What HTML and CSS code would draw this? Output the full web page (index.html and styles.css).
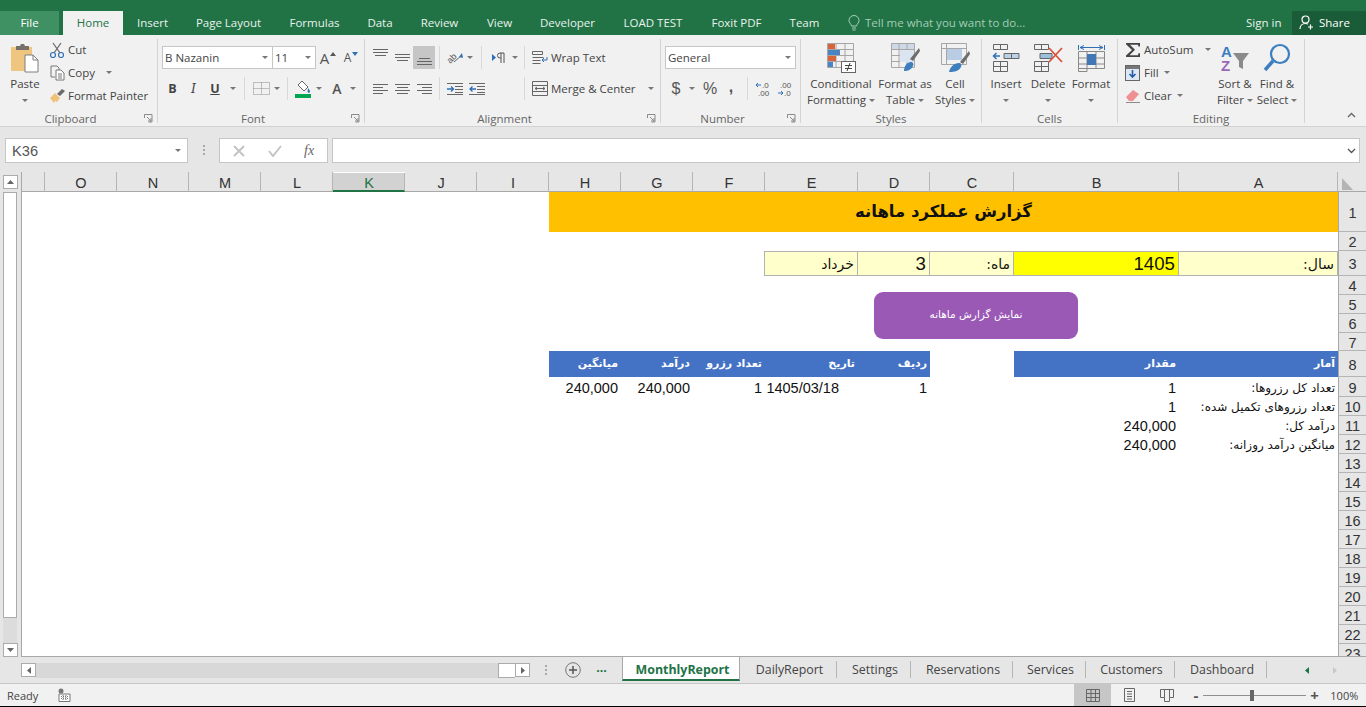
FILE: index.html
```html
<!DOCTYPE html>
<html lang="fa">
  <head>
    <meta charset="UTF-8" />
    <title>MonthlyReport - Excel</title>
    <link rel="stylesheet" href="styles.css">
  </head>
  <body>
    <div class="tabbar">
      <div class="tab file">File</div>
      <div class="tab active">Home</div>
      <div class="tab">Insert</div>
      <div class="tab">Page Layout</div>
      <div class="tab">Formulas</div>
      <div class="tab">Data</div>
      <div class="tab">Review</div>
      <div class="tab">View</div>
      <div class="tab">Developer</div>
      <div class="tab">LOAD TEST</div>
      <div class="tab">Foxit PDF</div>
      <div class="tab">Team</div>
      <div class="tell-me">
        <svg width="12" height="16" viewBox="0 0 12 16"><path d="M3.500 11C3 8.500 1 8 1 5.500a5 5 0 0 1 10 0C11 8 9 8.500 8.500 11zM4 13h4M4.500 15h3" fill="none" stroke="#a9d0ba"/></svg>
        <span>Tell me what you want to do...</span>
      </div>
      <div class="sign-in">Sign in</div>
      <div class="share">
        <svg width="15" height="15" viewBox="0 0 15 15"><circle cx="6.500" cy="4.500" r="3.500" fill="none" stroke="#fff" stroke-width="1.200"/><path d="M1 14c0-3 2-5.500 5.500-5.500 1 0 2 .2 2.500.6M11.500 9.500v5M9 12h5" fill="none" stroke="#fff" stroke-width="1.200"/></svg>
        <span>Share</span>
      </div>
    </div>

    <div class="ribbon">
      <!-- Clipboard -->
      <div class="group clipboard">
        <div class="group-body">
          <div class="big paste">
            <svg width="30" height="30" viewBox="0 0 30 30"><rect x="1" y="4" width="21" height="24" fill="#eec67f"/><path d="M6 7V3h4l1-2h3l1 2h4v4z" fill="#77706a"/><path d="M15 12h8l5 5v12H15z" fill="#fff" stroke="#7f7f7f"/><path d="M23 12v5h5" fill="none" stroke="#7f7f7f"/></svg>
            <div class="big-label">Paste</div>
            <span class="caret"></span>
          </div>
          <div class="small-col">
            <div class="small-row">
              <svg class="small-icon" viewBox="0 0 17 16"><path d="M4 1l7 10M12 1L5 11" fill="none" stroke="#6d6d6d" stroke-width="1.300"/><circle cx="4" cy="13" r="2.500" fill="none" stroke="#2f6fb5" stroke-width="1.200"/><circle cx="12" cy="13" r="2.500" fill="none" stroke="#2f6fb5" stroke-width="1.200"/></svg>
              <span>Cut</span>
            </div>
            <div class="small-row">
              <svg class="small-icon" viewBox="0 0 17 16"><path d="M2 1h6l2 2v3M2 1v11h4" fill="none" stroke="#777"/><path d="M7 5h5l3 3v7H7z" fill="#fff" stroke="#777"/><path d="M9 9h4M9 11h4M9 13h4" stroke="#777"/></svg>
              <span>Copy</span>
              <span class="caret copy-caret"></span>
            </div>
            <div class="small-row">
              <svg class="small-icon" viewBox="0 0 17 16"><path d="M1 10l5-5 5 5-3 4-2-1-1 2z" fill="#efc27a"/><path d="M8 6l5-5 3 2-5 5z" fill="#6b6b6b"/></svg>
              <span>Format Painter</span>
            </div>
          </div>
        </div>
        <div class="group-foot"><span class="group-label">Clipboard</span><svg class="launcher" viewBox="0 0 9 9"><path d="M.5 4V.5H8V8H4.500M3 3l4 4M7 4v3H4" fill="none" stroke="#8a8a8a"/></svg></div>
      </div>

      <!-- Font -->
      <div class="group font">
        <div class="group-body stack">
          <div class="tool-row">
            <div class="combo font-name"><span>B Nazanin</span><span class="caret"></span></div>
            <div class="combo font-size"><span>11</span><span class="caret"></span></div>
            <div class="tool w24"><span class="a-big">A</span><svg class="a-mark" width="6" height="4" viewBox="0 0 6 4"><path d="M3 0l3 4H0z" fill="#555"/></svg></div>
            <div class="tool w22"><span class="a-small">A</span><svg class="a-mark" width="6" height="4" viewBox="0 0 6 4"><path d="M0 0h6L3 4z" fill="#2f6fb5"/></svg></div>
          </div>
          <div class="tool-row">
            <div class="tool w21 bold">B</div>
            <div class="tool w21 ital">I</div>
            <div class="tool w22 under">U</div>
            <div class="tool w14"><span class="caret"></span></div>
            <i class="sep"></i>
            <div class="tool w25">
              <svg width="19" height="15" viewBox="0 0 19 15"><path d="M1.500 1.500h16v12h-16zM9.500 1.500v12M1.500 7.500h16" fill="none" stroke="#8a8a8a" stroke-dasharray="1 1"/></svg>
            </div>
            <div class="tool w6"><span class="caret"></span></div>
            <i class="w3"></i>
            <i class="sep"></i>
            <div class="tool w22">
              <svg width="16" height="18" viewBox="0 0 16 18"><path d="M7 1l6 6-4 4-6-6z" fill="#fff" stroke="#666"/><path d="M13 8c1 1.500 2 2.500 2 3.500a1.200 1.200 0 0 1-2.400 0c0-1 .4-2 .4-3.500z" fill="#2f6fb5"/><rect y="14" width="16" height="4" fill="#00a650"/></svg>
            </div>
            <div class="tool w10"><span class="caret"></span></div>
            <div class="tool w26 font-color">A</div>
            <div class="tool w6"><span class="caret"></span></div>
          </div>
        </div>
        <div class="group-foot"><span class="group-label">Font</span><svg class="launcher" viewBox="0 0 9 9"><path d="M.5 4V.5H8V8H4.500M3 3l4 4M7 4v3H4" fill="none" stroke="#8a8a8a"/></svg></div>
      </div>

      <!-- Alignment -->
      <div class="group alignment">
        <div class="group-body stack">
          <div class="tool-row">
            <div class="tool w22"><svg width="15" height="8" viewBox="0 0 15 8" class="up4"><path d="M0 .5h15M0 3.500h15M2 6.500h11" stroke="#666"/></svg></div>
            <div class="tool w22"><svg width="15" height="8" viewBox="0 0 15 8"><path d="M0 .5h15M0 3.500h15M2 6.500h11" stroke="#666"/></svg></div>
            <div class="tool w22 pressed"><svg width="15" height="8" viewBox="0 0 15 8" class="down4"><path d="M2 .5h11M0 3.500h15M0 6.500h15" stroke="#666"/></svg></div>
            <i class="sep"></i>
            <div class="tool w22"><svg width="18" height="18" viewBox="0 0 18 18"><text x="1" y="13" class="orient" transform="rotate(-45 5 10)">ab</text><path d="M8 13l7-6" stroke="#666" fill="none"/><path d="M16 4l1 5-4-1z" fill="#2f6fb5"/></svg></div>
            <div class="tool w8"><span class="caret"></span></div>
            <i class="w3"></i>
            <i class="sep"></i>
            <div class="tool w24"><svg width="13" height="11" viewBox="0 0 13 11"><path d="M0 2l4 3.500L0 9z" fill="#2f6fb5"/><path d="M9 1v10M12 1v10M12 1H8a2.500 2.500 0 0 0 0 5h1" fill="none" stroke="#555"/></svg></div>
            <div class="tool w10"><span class="caret"></span></div>
            <i class="sep"></i>
            <div class="wide-btn">
              <svg width="16" height="15" viewBox="0 0 16 15"><path d="M.5 1.500h10v3H.5zM.5 7.500h11M.5 10.500h8M.5 13.500h8" fill="none" stroke="#666"/><path d="M15 7v3h-5M12 8l-2 2 2 2" fill="none" stroke="#2f6fb5"/></svg>
              <span>Wrap Text</span>
            </div>
          </div>
          <div class="tool-row">
            <div class="tool w22"><svg width="15" height="10" viewBox="0 0 15 10"><path d="M0 .5h15M0 3.500h10M0 6.500h15M0 9.500h10" stroke="#666"/></svg></div>
            <div class="tool w22"><svg width="15" height="10" viewBox="0 0 15 10"><path d="M0 .5h15M2 3.500h11M0 6.500h15M2 9.500h11" stroke="#666"/></svg></div>
            <div class="tool w22"><svg width="15" height="10" viewBox="0 0 15 10"><path d="M0 .5h15M5 3.500h10M0 6.500h15M5 9.500h10" stroke="#666"/></svg></div>
            <i class="sep"></i>
            <div class="tool w22"><svg width="16" height="12" viewBox="0 0 16 12"><path d="M0 .5h16M8 3.500h8M8 6.500h8M8 9.500h8M0 11.500h16" stroke="#666"/><path d="M0 6h6M4 3.500L6.500 6 4 8.500" fill="none" stroke="#2f6fb5" stroke-width="1.300"/></svg></div>
            <div class="tool w22"><svg width="16" height="12" viewBox="0 0 16 12"><path d="M0 .5h16M8 3.500h8M8 6.500h8M8 9.500h8M0 11.500h16" stroke="#666"/><path d="M7 6H1M3.500 3.500L1 6l2.500 2.500" fill="none" stroke="#2f6fb5" stroke-width="1.300"/></svg></div>
            <i class="w32"></i>
            <i class="sep"></i>
            <div class="wide-btn">
              <svg width="16" height="15" viewBox="0 0 16 15"><path d="M.5.500h15v14H.500zM.5 4.500h15M.5 10.500h15M3 7.500h10M5 6L3 7.500 5 9M11 6l2 1.500L11 9" fill="none" stroke="#666"/></svg>
              <span>Merge &amp; Center</span>
              <span class="caret merge-caret"></span>
            </div>
          </div>
        </div>
        <div class="group-foot"><span class="group-label">Alignment</span><svg class="launcher" viewBox="0 0 9 9"><path d="M.5 4V.5H8V8H4.500M3 3l4 4M7 4v3H4" fill="none" stroke="#8a8a8a"/></svg></div>
      </div>

      <!-- Number -->
      <div class="group number">
        <div class="group-body stack">
          <div class="tool-row">
            <div class="combo number-format"><span>General</span><span class="caret"></span></div>
          </div>
          <div class="tool-row">
            <div class="tool w22 num-sym">$</div>
            <div class="tool w10"><span class="caret"></span></div>
            <div class="tool w26 num-sym">%</div>
            <div class="tool w16 num-sym comma">,</div>
            <i class="w4"></i>
            <i class="sep"></i>
            <div class="tool w22"><svg width="20" height="18" viewBox="0 0 20 18"><path d="M8 5H3M5 3L3 5l2 2" fill="none" stroke="#2f6fb5"/><text x="9" y="8" class="tiny">.0</text><text x="5" y="16" class="tiny">.00</text></svg></div>
            <div class="tool w22"><svg width="20" height="18" viewBox="0 0 20 18"><text x="5" y="8" class="tiny">.00</text><path d="M3 13h5M6 11l2 2-2 2" fill="none" stroke="#2f6fb5"/><text x="9" y="16" class="tiny">.0</text></svg></div>
          </div>
        </div>
        <div class="group-foot"><span class="group-label">Number</span><svg class="launcher" viewBox="0 0 9 9"><path d="M.5 4V.5H8V8H4.500M3 3l4 4M7 4v3H4" fill="none" stroke="#8a8a8a"/></svg></div>
      </div>

      <!-- Styles -->
      <div class="group styles">
        <div class="group-body">
          <div class="big w68">
            <svg width="30" height="30" viewBox="0 0 30 30"><path d="M1.500.500h26v24h-26zM10 .500v24M19 .500v24M1.500 6.500h26M1.500 12.500h26M1.500 18.500h26" fill="none" stroke="#a6a6a6"/><rect x="2" y="1" width="7" height="5" fill="#d9633a"/><rect x="2" y="7" width="12" height="5" fill="#4a84c4"/><rect x="2" y="13" width="8" height="5" fill="#d9633a"/><rect x="2" y="19" width="5" height="5" fill="#4a84c4"/><rect x="15.500" y="18.500" width="14" height="11" fill="#fff" stroke="#666"/><path d="M19 22.500h7M19 25.500h7M24 20l-3 8" stroke="#444" fill="none"/></svg>
            <div class="big-label">Conditional</div>
            <div class="big-label">Formatting<span class="caret inline"></span></div>
          </div>
          <div class="big w60">
            <svg width="30" height="30" viewBox="0 0 30 30"><rect x="2" y="1" width="22" height="6" fill="#cfd8e6"/><path d="M1.500.500h23v24h-23zM9 .500v24M17 .500v24M1.500 6.500h23M1.500 12.500h23M1.500 18.500h23" fill="none" stroke="#a6a6a6"/><path d="M10 7h14v12H10z" fill="#dbe5f1"/><path d="M29 5l-9 11 3 2 7-10z" fill="#6d6d6d"/><path d="M14 28c0-5 3-9 7-9 2 0 3 2 2 4-2 4-5 5-9 5z" fill="#3d7ebf"/></svg>
            <div class="big-label">Format as</div>
            <div class="big-label">Table<span class="caret inline"></span></div>
          </div>
          <div class="big w40">
            <svg width="30" height="30" viewBox="0 0 30 30"><path d="M1.500.500h25v21h-25zM1.500 5.500h25M6.500.500v21" fill="none" stroke="#a6a6a6"/><rect x="7" y="6" width="15" height="11" fill="#b8cce4"/><path d="M29 8l-9 11 3 2 7-10z" fill="#6d6d6d"/><path d="M9 29c1-5 5-9 10-9 2 0 3 2 2 4-2 4-6 5-12 5z" fill="#3d7ebf"/></svg>
            <div class="big-label">Cell</div>
            <div class="big-label">Styles<span class="caret inline"></span></div>
          </div>
        </div>
        <div class="group-foot"><span class="group-label">Styles</span></div>
      </div>

      <!-- Cells -->
      <div class="group cells-group">
        <div class="group-body">
          <div class="big w42">
            <svg width="28" height="30" viewBox="0 0 28 30"><path d="M1.500 1.500h14v5h-14zM8.500 1.500v5M1.500 18.500h14v10h-14zM1.500 23.500h14M8.500 18.500v10" fill="none" stroke="#666"/><path d="M12 10.500h15v5H12zM19.500 10.500v5" fill="#bcd0e6" stroke="#666"/><path d="M8 13H2M4.500 10L1.500 13l3 3" fill="none" stroke="#2f6fb5" stroke-width="1.500"/></svg>
            <div class="big-label">Insert</div>
            <span class="caret"></span>
          </div>
          <div class="big w42">
            <svg width="30" height="30" viewBox="0 0 30 30"><path d="M1.500 1.500h14v5h-14zM8.500 1.500v5M1.500 18.500h14v10h-14zM1.500 23.500h14M8.500 18.500v10" fill="none" stroke="#666"/><path d="M7 10.500h12v5H7z" fill="#9cc0dc" stroke="#666"/><path d="M16 5l13 14M29 5L16 19" stroke="#d9533a" stroke-width="1.800"/></svg>
            <div class="big-label">Delete</div>
            <span class="caret"></span>
          </div>
          <div class="big w44">
            <svg width="29" height="30" viewBox="0 0 29 30"><path d="M1.500 2v5M27.500 2v5M3 4.500h23M7 2.500L3 4.500l4 2M22 2.500l4 2-4 2" fill="none" stroke="#2f6fb5"/><path d="M1.500 8.500h26v17h-26zM1.500 15h26M1.500 21h26M10 8.500v20h-8.500v-3M19 8.500v17" fill="none" stroke="#888"/><rect x="10" y="11" width="9" height="11" fill="#3f78b5"/></svg>
            <div class="big-label">Format</div>
            <span class="caret"></span>
          </div>
        </div>
        <div class="group-foot"><span class="group-label">Cells</span></div>
      </div>

      <!-- Editing -->
      <div class="group editing">
        <div class="group-body">
          <div class="small-col edit-col">
            <div class="small-row">
              <svg class="edit-icon" viewBox="0 0 16 16"><path d="M1 1h14v3.500h-1.500L13 2.800H5l5 5-5.500 5.500H13l.5-2H15V15H1v-1.500L7 8 1 2.300z" fill="#444"/></svg>
              <span>AutoSum</span>
              <span class="caret sum-caret"></span>
            </div>
            <div class="small-row">
              <svg class="edit-icon" viewBox="0 0 16 16"><rect x=".5" y=".5" width="14" height="15" fill="#dfe8f2" stroke="#666"/><rect x="1" y="1" width="13" height="3" fill="#777"/><path d="M7.500 5v7M4.500 9l3 3 3-3" fill="none" stroke="#1f5fa8" stroke-width="1.600"/></svg>
              <span>Fill</span>
              <span class="caret near-caret"></span>
            </div>
            <div class="small-row">
              <svg class="edit-icon" viewBox="0 0 16 16"><path d="M1 9l7-7 6 4-6 7H4z" fill="#ee8f92"/><path d="M1 14.500h14" stroke="#8a8a8a"/></svg>
              <span>Clear</span>
              <span class="caret near-caret"></span>
            </div>
          </div>
          <div class="big w44">
            <svg class="sort-icon" width="30" height="32" viewBox="0 0 30 32"><text x="1" y="14" class="sort-a">A</text><text x="1" y="28" class="sort-z">Z</text><path d="M13 10h16l-6 8v8l-4-2v-6z" fill="#8a8a8a"/></svg>
            <div class="big-label">Sort &amp;</div>
            <div class="big-label">Filter<span class="caret inline"></span></div>
          </div>
          <div class="big w40">
            <svg width="30" height="30" viewBox="0 0 30 30"><circle cx="18" cy="11" r="9" fill="none" stroke="#3d7ebf" stroke-width="2.200"/><path d="M11 18L3 27" stroke="#3d7ebf" stroke-width="3.500"/></svg>
            <div class="big-label">Find &amp;</div>
            <div class="big-label">Select<span class="caret inline"></span></div>
          </div>
        </div>
        <div class="group-foot"><span class="group-label">Editing</span></div>
      </div>

      <svg class="collapse" width="9" height="6" viewBox="0 0 9 6"><path d="M1 5l3.500-3.500L8 5" fill="none" stroke="#666" stroke-width="1.400"/></svg>
    </div>

    <div class="formula-bar">
      <div class="name-box"><span>K36</span><span class="caret"></span></div>
      <div class="grip"></div>
      <div class="fx-box">
        <svg width="14" height="12" viewBox="0 0 14 12"><path d="M2 1l10 10M12 1L2 11" stroke="#c4c4c4" stroke-width="2"/></svg>
        <svg width="14" height="12" viewBox="0 0 14 12"><path d="M1 6l4 5 8-10" fill="none" stroke="#c4c4c4" stroke-width="2"/></svg>
        <span class="fx">fx</span>
      </div>
      <div class="formula-input">
        <svg width="9" height="6" viewBox="0 0 9 6"><path d="M1 1l3.500 3.500L8 1" fill="none" stroke="#555" stroke-width="1.300"/></svg>
      </div>
    </div>

    <div class="sheet-area">
      <div class="vscroll">
        <div class="scroll-btn"><svg width="7" height="4" viewBox="0 0 7 4"><path d="M3.500 0L7 4H0z" fill="#666"/></svg></div>
        <div class="vthumb"></div>
        <div class="vtrack"></div>
        <div class="scroll-btn"><svg width="7" height="4" viewBox="0 0 7 4"><path d="M0 0h7L3.500 4z" fill="#666"/></svg></div>
      </div>

      <div class="sheet">
        <div class="col-head"></div>
        <div class="col-head">O</div>
        <div class="col-head">N</div>
        <div class="col-head">M</div>
        <div class="col-head">L</div>
        <div class="col-head selected">K</div>
        <div class="col-head">J</div>
        <div class="col-head">I</div>
        <div class="col-head">H</div>
        <div class="col-head">G</div>
        <div class="col-head">F</div>
        <div class="col-head">E</div>
        <div class="col-head">D</div>
        <div class="col-head">C</div>
        <div class="col-head">B</div>
        <div class="col-head">A</div>
        <div class="corner"><svg width="11" height="12" viewBox="0 0 11 12"><path d="M0 0l11 12H0z" fill="#b4b4b4"/></svg></div>

        <div class="row-head">1</div>
        <div class="row-head">2</div>
        <div class="row-head">3</div>
        <div class="row-head">4</div>
        <div class="row-head">5</div>
        <div class="row-head">6</div>
        <div class="row-head">7</div>
        <div class="row-head">8</div>
        <div class="row-head">9</div>
        <div class="row-head">10</div>
        <div class="row-head">11</div>
        <div class="row-head">12</div>
        <div class="row-head">13</div>
        <div class="row-head">14</div>
        <div class="row-head">15</div>
        <div class="row-head">16</div>
        <div class="row-head">17</div>
        <div class="row-head">18</div>
        <div class="row-head">19</div>
        <div class="row-head">20</div>
        <div class="row-head">21</div>
        <div class="row-head">22</div>
        <div class="row-head">23</div>

        <div class="cell title" dir="rtl">گزارش عملکرد ماهانه</div>

        <div class="cell r3 ca input fa" dir="rtl">سال:</div>
        <div class="cell r3 cb input year">1405</div>
        <div class="cell r3 cc input fa" dir="rtl">ماه:</div>
        <div class="cell r3 cd input big-num">3</div>
        <div class="cell r3 ce input fa" dir="rtl">خرداد</div>

        <div class="cell r8 ca head" dir="rtl">آمار</div>
        <div class="cell r8 cb head" dir="rtl">مقدار</div>
        <div class="cell r8 cd head" dir="rtl">ردیف</div>
        <div class="cell r8 ce head" dir="rtl">تاریخ</div>
        <div class="cell r8 cf head" dir="rtl">تعداد رزرو</div>
        <div class="cell r8 cg head" dir="rtl">درآمد</div>
        <div class="cell r8 ch head" dir="rtl">میانگین</div>

        <div class="cell r9 ca fa" dir="rtl">تعداد کل رزروها:</div>
        <div class="cell r9 cb">1</div>
        <div class="cell r9 cd">1</div>
        <div class="cell r9 ce date">1405/03/18</div>
        <div class="cell r9 cf">1</div>
        <div class="cell r9 cg">240,000</div>
        <div class="cell r9 ch">240,000</div>

        <div class="cell r10 ca fa" dir="rtl">تعداد رزروهای تکمیل شده:</div>
        <div class="cell r10 cb">1</div>
        <div class="cell r11 ca fa" dir="rtl">درآمد کل:</div>
        <div class="cell r11 cb">240,000</div>
        <div class="cell r12 ca fa" dir="rtl">میانگین درآمد روزانه:</div>
        <div class="cell r12 cb">240,000</div>

        <div class="report-btn" dir="rtl">نمایش گزارش ماهانه</div>
      </div>
    </div>

    <div class="sheet-bar">
      <div class="hscroll">
        <div class="scroll-btn"><svg width="4" height="7" viewBox="0 0 4 7"><path d="M4 0v7L0 3.500z" fill="#666"/></svg></div>
        <div class="htrack"></div>
        <div class="hthumb"></div>
        <div class="scroll-btn"><svg width="4" height="7" viewBox="0 0 4 7"><path d="M0 0v7l4-3.500z" fill="#666"/></svg></div>
      </div>
      <div class="grip bar-grip"></div>
      <svg class="add-sheet" width="16" height="16" viewBox="0 0 16 16"><circle cx="8" cy="8" r="7.300" fill="none" stroke="#777"/><path d="M8 4v8M4 8h8" stroke="#555" stroke-width="1.500"/></svg>
      <div class="more-tabs">...</div>
      <div class="sheet-tab active">MonthlyReport</div>
      <div class="sheet-tab">DailyReport</div>
      <div class="sheet-tab">Settings</div>
      <div class="sheet-tab">Reservations</div>
      <div class="sheet-tab">Services</div>
      <div class="sheet-tab">Customers</div>
      <div class="sheet-tab">Dashboard</div>
      <svg class="tab-nav" width="4" height="7" viewBox="0 0 4 7"><path d="M4 0v7L0 3.500z" fill="#217346"/></svg>
      <svg class="tab-nav next" width="4" height="7" viewBox="0 0 4 7"><path d="M0 0v7l4-3.500z" fill="#c8c8c8"/></svg>
    </div>

    <div class="status-bar">
      <span class="ready">Ready</span>
      <svg class="macro" width="13" height="14" viewBox="0 0 13 14"><circle cx="3" cy="3" r="2.500" fill="#777"/><path d="M1 6h11v7.500H1z" fill="#fff" stroke="#777"/><path d="M3 8.500h7M3 10.500h7M5 7v6M8 7v6" stroke="#777" stroke-dasharray="1 1"/></svg>
      <div class="view-btn on"><svg width="14" height="13" viewBox="0 0 14 13"><path d="M.5.500h13v12H.500zM.5 4.500h13M.5 8.500h13M5 .500v12M9.500.500v12" fill="none" stroke="#666"/></svg></div>
      <div class="view-btn"><svg width="11" height="14" viewBox="0 0 11 14"><path d="M.5.500h10v13H.500zM3 3.500h5M3 6h5M3 8.500h5M3 11h5" fill="none" stroke="#666"/></svg></div>
      <div class="view-btn"><svg width="14" height="13" viewBox="0 0 14 13"><path d="M.5.500h13v8H9.500v4h-5v-4h-4zM4.500.500v8M9.500.500v8" fill="none" stroke="#666"/></svg></div>
      <div class="zoom-slider">
        <span class="zoom-sign">-</span>
        <div class="zoom-track"><i class="zoom-thumb"></i></div>
        <span class="zoom-sign">+</span>
      </div>
      <span class="zoom-value">100%</span>
    </div>
  </body>
</html>
```

FILE: styles.css
```css
* {
  box-sizing: border-box;
}

body {
  margin: 0;
  width: 1366px;
  height: 707px;
  overflow: hidden;
  background: #000;
  font-family: "Open Sans", "Noto Sans", sans-serif;
  font-size: 11.500px;
  color: #444;
}

svg {
  display: block;
  flex-shrink: 0;
}

i {
  display: block;
  flex-shrink: 0;
}

/* title tabs */
.tabbar {
  height: 35px;
  padding-top: 11px;
  background: #217346;
  display: grid;
  grid-template-columns: 59px 64px 59px 93px 79px 52px 67px 53px 83px 88px 79px 57px 413px 46px 74px;
  color: #e9f2ec;
}

.tab {
  line-height: 23px;
  text-align: center;
}

.tab.file {
  background: #3f9063;
  color: #fff;
}

.tab.active {
  background: #f1f1f1;
  color: #217346;
  margin-left: 4px;
}

.tell-me {
  display: flex;
  align-items: center;
  gap: 5px;
  padding: 0 0 1px 15px;
  color: #a5ccb6;
}

.sign-in {
  line-height: 23px;
  white-space: nowrap;
}

.share {
  display: flex;
  align-items: center;
  gap: 5px;
  padding: 0 0 1px 7px;
  background: #1b5c38;
  color: #fff;
}

/* ribbon */
.ribbon {
  height: 92px;
  padding-top: 4px;
  background: #f1f1f1;
  border-bottom: 1px solid #d2d2d2;
  display: flex;
}

.group {
  height: 84px;
  border-right: 1px solid #d4d4d4;
  flex-shrink: 0;
}

.clipboard { width: 158px; }
.font { width: 207px; }
.alignment { width: 296px; }
.number { width: 140px; }
.styles { width: 181px; }
.cells-group { width: 136px; }
.editing { width: 187px; }

.group-body {
  height: 72px;
  display: flex;
}

.group-body.stack {
  flex-direction: column;
  padding: 7px 0 0 4px;
  gap: 8px;
}

.group-foot {
  height: 12px;
  display: flex;
  line-height: 16px;
  color: #666;
}

.group-label {
  flex: 1;
  text-align: center;
}

.launcher {
  width: 9px;
  height: 9px;
  margin: 3px 4px 0 3px;
}

.tool-row {
  height: 23px;
  display: flex;
  align-items: center;
}

.tool {
  height: 23px;
  display: flex;
  align-items: center;
  justify-content: center;
  flex-shrink: 0;
}

.w3 { width: 3px; }
.w4 { width: 4px; }
.w6 { width: 6px; }
.w8 { width: 8px; }
.w10 { width: 10px; }
.w14 { width: 14px; }
.w16 { width: 16px; }
.w21 { width: 21px; }
.w22 { width: 22px; }
.w24 { width: 24px; }
.w25 { width: 25px; }
.w26 { width: 26px; }
.w32 { width: 32px; }
.w40 { width: 40px; }
.w42 { width: 42px; }
.w44 { width: 44px; }
.w60 { width: 60px; }
.w68 { width: 68px; }

.sep {
  width: 1px;
  height: 23px;
  margin: 0 4px;
  background: #d8d8d8;
}

.caret {
  display: block;
  width: 0;
  height: 0;
  border-left: 3px solid transparent;
  border-right: 3px solid transparent;
  border-top: 3px solid #777;
  flex-shrink: 0;
}

.caret.inline {
  display: inline-block;
  margin-left: 3px;
  vertical-align: 2px;
}

.combo {
  height: 23px;
  background: #fff;
  border: 1px solid #c6c6c6;
  display: flex;
  align-items: center;
  justify-content: space-between;
  padding: 0 4px 0 2px;
  flex-shrink: 0;
}

.font-name { width: 111px; }
.font-size { width: 43px; border-left: 0; }
.number-format { width: 131px; }

.bold { font-weight: 700; font-size: 12.500px; }
.ital { font-style: italic; font-family: "DejaVu Serif", serif; font-size: 12.500px; }
.under { font-weight: 700; text-decoration: underline; font-size: 12.500px; }

.a-big { font-size: 15px; color: #555; }
.a-small { font-size: 12px; color: #555; }
.a-mark { margin: -8px 0 0 1px; }

.font-color {
  font-size: 14px;
  font-weight: 600;
  color: #555;
}

.pressed {
  background: #c6c6c6;
}

.up4 { margin-top: -9px; }
.down4 { margin-top: 9px; }

.orient {
  font-family: "Liberation Sans", sans-serif;
  font-size: 9px;
  fill: #555;
}

.wide-btn {
  display: flex;
  align-items: center;
  gap: 3px;
  padding-left: 3px;
  white-space: nowrap;
}

.merge-caret { margin-left: 9px; }

.num-sym {
  font-size: 16px;
  color: #555;
  font-family: "Liberation Sans", sans-serif;
}

.comma { font-weight: 700; margin-top: -4px; }

.tiny {
  font-family: "Liberation Sans", sans-serif;
  font-size: 8px;
  fill: #555;
}

.big {
  display: flex;
  flex-direction: column;
  align-items: center;
  padding-top: 4px;
  flex-shrink: 0;
}

.big > svg {
  margin-bottom: 3px;
}

.big > .sort-icon {
  margin-bottom: 1px;
}

.big-label {
  line-height: 16px;
  white-space: nowrap;
}

.big > .caret {
  margin-top: 7px;
}

.paste {
  width: 44px;
  margin-left: 3px;
}

.small-col {
  margin: -1px 0 0 2px;
  display: flex;
  flex-direction: column;
}

.small-row {
  height: 23px;
  display: flex;
  align-items: center;
  gap: 2px;
  white-space: nowrap;
}

.small-icon {
  width: 17px;
  height: 16px;
}

.copy-caret { margin-left: 9px; }

.styles .group-body { padding-left: 6px; }
.cells-group .group-body { padding-left: 3px; }

.edit-col {
  width: 95px;
  margin-left: 0;
  padding-left: 7px;
  flex-shrink: 0;
}

.edit-col .small-row { gap: 3px; }

.edit-icon {
  width: 16px;
  height: 16px;
}

.sum-caret { margin-left: 9px; }
.near-caret { margin-left: 2px; }

.sort-a {
  font-family: "Liberation Sans", sans-serif;
  font-weight: 700;
  font-size: 15px;
  fill: #3d7ebf;
}

.sort-z {
  font-family: "Liberation Sans", sans-serif;
  font-weight: 700;
  font-size: 15px;
  fill: #9a66b8;
}

.collapse {
  margin: 73px 0 0 42px;
}

/* formula bar */
.formula-bar {
  height: 45px;
  padding: 11px 6px 0 5px;
  background: #e6e6e6;
  display: flex;
  align-items: flex-start;
}

.name-box {
  width: 183px;
  height: 25px;
  background: #fff;
  border: 1px solid #c6c6c6;
  display: flex;
  align-items: center;
  justify-content: space-between;
  padding: 0 6px;
  font-family: "Liberation Sans", sans-serif;
  font-size: 14.670px;
  color: #555;
}

.grip {
  width: 2px;
  height: 11px;
  margin: 7px 14px 0 15px;
  background: repeating-linear-gradient(#a8a8a8 0 2px, transparent 2px 4px);
  flex-shrink: 0;
}

.fx-box {
  width: 109px;
  height: 25px;
  background: #fff;
  border: 1px solid #c6c6c6;
  display: flex;
  align-items: center;
  gap: 22px;
  padding-left: 12px;
}

.fx {
  font-family: "Liberation Serif", serif;
  font-style: italic;
  font-size: 14px;
  color: #666;
}

.formula-input {
  flex: 1;
  height: 25px;
  margin-left: 4px;
  background: #fff;
  border: 1px solid #c6c6c6;
  display: flex;
  align-items: center;
  justify-content: flex-end;
  padding-right: 3px;
}

/* sheet */
.sheet-area {
  height: 485px;
  background: #e6e6e6;
  display: flex;
}

.vscroll {
  width: 22px;
  flex-shrink: 0;
  padding: 3px 4px 0 3px;
  border-right: 1px solid #a8a8a8;
  height: 485px;
  display: flex;
  flex-direction: column;
}

.scroll-btn {
  width: 15px;
  height: 14px;
  background: #fff;
  border: 1px solid #ababab;
  display: flex;
  align-items: center;
  justify-content: center;
  flex-shrink: 0;
}

.vthumb {
  height: 426px;
  margin-top: 3px;
  background: #fff;
  border: 1px solid #ababab;
}

.vtrack {
  flex: 1;
  background: #dcdcdc;
}

.sheet {
  position: relative;
  flex: 1;
  height: 485px;
  overflow: hidden;
  display: grid;
  grid-template-columns: 23px repeat(10, 72px) 93px 72px 84px 165px 159px 28px;
  grid-template-rows: 20px 40px 19px 25px 19px 19px 19px 18px 26px 20px repeat(14, 19px);
  background: #fff;
  border-bottom: 1px solid #a8a8a8;
  font-family: "Liberation Sans", "DejaVu Sans", sans-serif;
  font-size: 14.500px;
  color: #111;
}

.col-head {
  grid-row: 1;
  background: #e6e6e6;
  border-right: 1px solid #b5b5b5;
  border-bottom: 1px solid #a8a8a8;
  text-align: center;
  line-height: 22px;
  padding-left: 1px;
  color: #333;
}

.col-head.selected {
  background: #d2d2d2;
  margin-top: 1px;
  line-height: 20px;
  border-bottom: 2px solid #217346;
  color: #217346;
}

.corner {
  grid-row: 1;
  grid-column: 17;
  background: #e6e6e6;
  border-bottom: 1px solid #a8a8a8;
  padding: 6px 0 0 4px;
}

.row-head {
  grid-column: 17;
  background: #e6e6e6;
  border-bottom: 1px solid #b5b5b5;
  border-left: 1px solid #a8a8a8;
  padding-top: 2px;
  color: #333;
  display: flex;
  align-items: center;
  justify-content: center;
}

.cell {
  min-width: 0;
  white-space: nowrap;
  text-align: right;
  padding-right: 3px;
  line-height: 21px;
}

.title {
  grid-column: 9 / 17;
  grid-row: 2;
  background: #ffc000;
  font-family: "DejaVu Sans", sans-serif;
  font-weight: 700;
  font-size: 16.500px;
  line-height: 39px;
  text-align: center;
  padding: 0;
}

.r3 { grid-row: 4; }
.r8 { grid-row: 9; }
.r9 { grid-row: 10; line-height: 23px; }
.r10 { grid-row: 11; }
.r11 { grid-row: 12; }
.r12 { grid-row: 13; }

.ca { grid-column: 16; }
.cb { grid-column: 15; }
.cc { grid-column: 14; }
.cd { grid-column: 13; }
.ce { grid-column: 12; }
.cf { grid-column: 11; }
.cg { grid-column: 10; }
.ch { grid-column: 9; }

.fa {
  font-family: "DejaVu Sans", sans-serif;
  font-size: 12px;
}

.input {
  background: #ffffcc;
  border: 1px solid #b2b2b2;
  border-left: 0;
  line-height: 24px;
}

.ce.input {
  margin-left: -1px;
  border-left: 1px solid #b2b2b2;
}

.input.fa {
  font-size: 14px;
}

.year {
  background: #ffff00;
  font-size: 18.670px;
}

.big-num {
  font-size: 18.670px;
}

.head {
  background: #4472c4;
  color: #fff;
  font-family: "DejaVu Sans", sans-serif;
  font-weight: 700;
  font-size: 11px;
  line-height: 25px;
}

.date {
  padding-right: 19px;
}

.report-btn {
  position: absolute;
  left: 852px;
  top: 120px;
  width: 204px;
  height: 47px;
  padding-bottom: 3px;
  border-radius: 9px;
  background: #9b59b6;
  color: #fff;
  font-family: "DejaVu Sans", sans-serif;
  font-size: 10.500px;
  display: flex;
  align-items: center;
  justify-content: center;
}

/* sheet tabs */
.sheet-bar {
  height: 27px;
  background: #e6e6e6;
  border-bottom: 1px solid #c6c6c6;
  display: flex;
  align-items: flex-start;
  font-size: 12.400px;
  color: #444;
}

.hscroll {
  width: 509px;
  margin: 6px 0 0 21px;
  height: 15px;
  display: flex;
  flex-shrink: 0;
}

.htrack {
  flex: 1;
  background: #d8d8d8;
}

.hthumb {
  width: 17px;
  background: #fff;
  border: 1px solid #ababab;
  border-right: 0;
}

.bar-grip {
  margin: 8px 13px 0 15px;
}

.add-sheet {
  margin: 5px 0 0 5px;
}

.more-tabs {
  width: 41px;
  text-align: center;
  font-weight: 700;
  line-height: 22px;
  color: #217346;
}

.sheet-tab {
  flex-shrink: 0;
  width: 92px;
  height: 17px;
  margin-top: 4px;
  padding-left: 3px;
  line-height: 17px;
  text-align: center;
  border-right: 1px solid #b5b5b5;
}

.sheet-tab.active {
  width: 118px;
  height: 24px;
  margin-top: 0;
  line-height: 25px;
  background: #fff;
  color: #217346;
  font-weight: 700;
  border-left: 1px solid #a8a8a8;
  border-right: 1px solid #a8a8a8;
  border-bottom: 2px solid #217346;
}

.sheet-tab:nth-child(6) { width: 97px; }
.sheet-tab:nth-child(7) { width: 74px; }
.sheet-tab:nth-child(8) { width: 102px; }
.sheet-tab:nth-child(9) { width: 73px; }
.sheet-tab:nth-child(10) { width: 89px; }
.sheet-tab:nth-child(11) { width: 92px; }

.tab-nav {
  margin: 10px 0 0 38px;
}

.tab-nav.next {
  margin-left: 24px;
}

/* status */
.status-bar {
  height: 22px;
  background: #f1f1f1;
  display: flex;
  align-items: center;
  color: #444;
  font-size: 11px;
}

.ready {
  margin-left: 7px;
}

.macro {
  margin-left: 20px;
  margin-right: 1003px;
}

.view-btn {
  width: 37px;
  height: 22px;
  display: flex;
  align-items: center;
  justify-content: center;
  flex-shrink: 0;
}

.view-btn.on {
  background: #c6c6c6;
}

.zoom-slider {
  display: flex;
  align-items: center;
  width: 125px;
  margin-left: 7px;
  gap: 4px;
}

.zoom-sign {
  width: 7px;
  text-align: center;
  font-size: 15px;
  font-weight: 700;
  color: #555;
  line-height: 15px;
}

.zoom-track {
  flex: 1;
  height: 1px;
  background: #8f8f8f;
  display: flex;
  align-items: center;
  justify-content: center;
}

.zoom-thumb {
  width: 4px;
  height: 11px;
  margin-right: 6px;
  background: #666;
}

.zoom-value {
  margin-left: 13px;
  white-space: nowrap;
}
```
